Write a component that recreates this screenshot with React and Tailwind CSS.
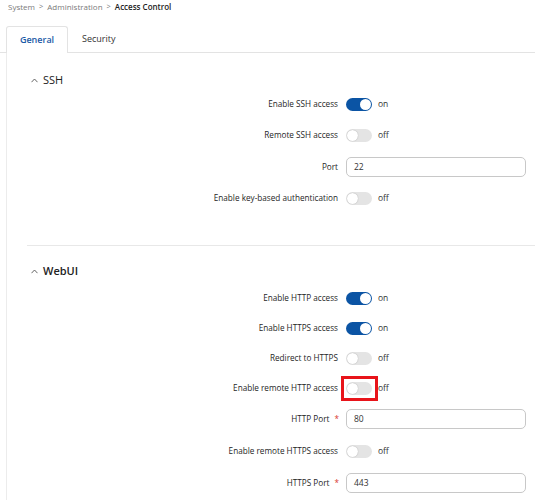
import React from "react";

function Toggle({ on, highlight }) {
    return (
        <div className="flex items-center gap-[6px]">
            <div className="relative">
                <div className={`w-[26px] h-[13px] rounded-full flex items-center px-[1px] ${on ? "bg-[#0b54a4] justify-end" : "bg-[#e4e4e4] justify-start"}`}>
                    <div className={`w-[11px] h-[11px] rounded-full bg-white ${on ? "" : "shadow-[0_0_1px_rgba(0,0,0,0.35)]"}`}></div>
                </div>
                {highlight && (
                    <span className="absolute left-[-5px] right-[-6px] top-[-6px] bottom-[-6px] border-[3.5px] border-[#e8141a]"></span>
                )}
            </div>
            <span className="text-[8.5px] text-[#333]">{on ? "on" : "off"}</span>
        </div>
    );
}

function Row({ label, required, h, children }) {
    return (
        <div className={`flex items-center ${h}`}>
            <div className="w-[331px] flex justify-end items-center text-[8.2px] text-[#262626]">
                <span>{label}</span>
                {required && <span className="text-[#d9382f] ml-[5px] mr-[-1px]">*</span>}
            </div>
            <div className="ml-[8px] flex-1 pr-[9px]">{children}</div>
        </div>
    );
}

function Input({ value }) {
    return (
        <div className="h-[20px] w-[180px] border border-[#c8c8c8] rounded-[5px] flex items-center px-[7px] text-[8.5px] text-[#333]">
            {value}
        </div>
    );
}

function Heading({ title, bold }) {
    return (
        <div className="flex items-center h-[18px] pl-[24px] gap-[5px]">
            <svg width="7" height="5" viewBox="0 0 7 5" fill="none" stroke="#555" strokeWidth="0.9">
                <path d="M0.5 4.2 L3.5 1 L6.5 4.2" />
            </svg>
            <span className={`text-[11px] text-[#222] ${bold ? "font-semibold" : "font-medium"}`}>{title}</span>
        </div>
    );
}

export default function App() {
    return (
        <div className="w-[535px] h-[500px] overflow-hidden bg-white" style={{ fontFamily: '"Open Sans", "Noto Sans", sans-serif' }}>
            <div className="h-[13px] flex items-center pl-[8px] gap-[4px] text-[8px] text-[#7a7a7a]">
                <span>System</span>
                <span className="text-[7.5px]">&gt;</span>
                <span>Administration</span>
                <span className="text-[7.5px]">&gt;</span>
                <span className="text-[#222] font-semibold">Access Control</span>
            </div>
            <div className="mt-[13px] flex h-[27px]">
                <div className="w-[6px] border-b border-[#e3e3e3]"></div>
                <div className="w-[62px] border border-b-0 border-[#e3e3e3] rounded-t-[3px] flex items-center justify-center text-[9px] font-semibold text-[#1a5aa6]">
                    General
                </div>
                <div className="flex-1 border-b border-[#e3e3e3] flex items-center pl-[14px] text-[9px] text-[#333]">
                    Security
                </div>
            </div>
            <div className="ml-[6px] border-l border-[#ececec] h-[447px]">
                <div className="pt-[18px]">
                    <Heading title="SSH" />
                </div>
                <Row label="Enable SSH access" h="h-[31px]"><Toggle on /></Row>
                <Row label="Remote SSH access" h="h-[31px]"><Toggle /></Row>
                <Row label="Port" h="h-[32px]"><Input value="22" /></Row>
                <Row label="Enable key-based authentication" h="h-[31px]"><Toggle /></Row>
                <div className="mt-[31px] ml-[20px] border-t border-[#e8e8e8]"></div>
                <div className="pt-[16px]">
                    <Heading title="WebUI" bold />
                </div>
                <div className="pt-[3px]">
                    <Row label="Enable HTTP access" h="h-[30px]"><Toggle on /></Row>
                    <Row label="Enable HTTPS access" h="h-[30px]"><Toggle on /></Row>
                    <Row label="Redirect to HTTPS" h="h-[30px]"><Toggle /></Row>
                    <Row label="Enable remote HTTP access" h="h-[30px]"><Toggle highlight /></Row>
                    <Row label="HTTP Port" required h="h-[32px]"><Input value="80" /></Row>
                    <Row label="Enable remote HTTPS access" h="h-[32px]"><Toggle /></Row>
                    <Row label="HTTPS Port" required h="h-[32px]"><Input value="443" /></Row>
                </div>
            </div>
        </div>
    );
}
